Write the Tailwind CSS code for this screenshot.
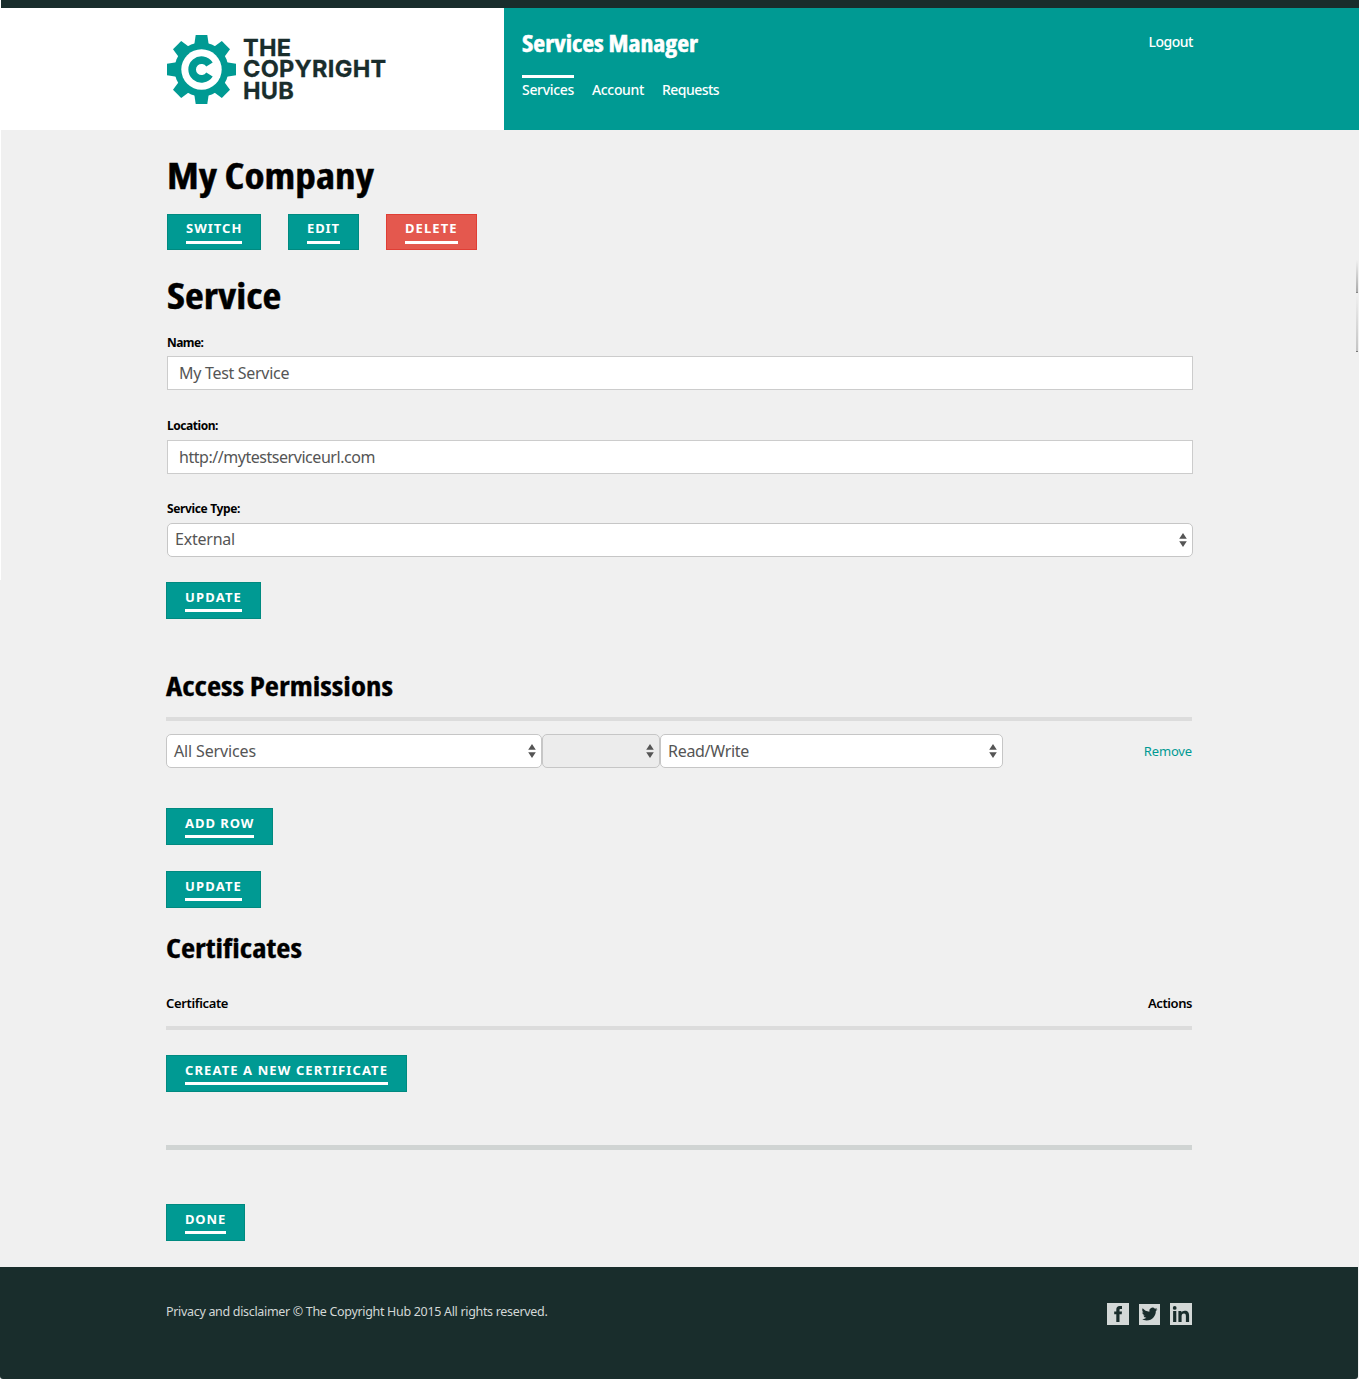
<!DOCTYPE html>
<html lang="en">
<head>
<meta charset="utf-8">
<title>Services Manager</title>
<script src="https://cdn.jsdelivr.net/npm/@tailwindcss/browser@4"></script>
</head>
<body class="relative h-[1379px] overflow-hidden bg-[#f0f0f0] font-['Noto_Sans',sans-serif] text-black">
<svg class="hidden">
  <symbol id="arrows" viewBox="0 0 8 14"><path d="M4 0 7.8 5.800H.2zM4 14 7.800 8.200H.2z" fill="#555"/></symbol>
</svg>
<div class="ml-px h-2 bg-[#192d2c]"></div>
<header class="flex h-[122px]">
  <div class="flex w-[504px] shrink-0 bg-white pt-[26px] pl-[166px]">
    <svg class="h-[71px] w-[71px] shrink-0" viewBox="-35.5 -35.5 71 71">
      <g fill="#009a93">
        <circle r="27"/>
        <path id="t" d="M-7.2-25-5.8-34.5H5.8L7.2-25V25L5.8 34.5H-5.8L-7.2 25z"/>
        <use href="#t" transform="rotate(45)"/><use href="#t" transform="rotate(90)"/><use href="#t" transform="rotate(135)"/>
      </g>
      <circle r="20.2" fill="#fff"/>
      <path d="M8-5A9.4 9.4 0 1 0 8 5" fill="none" stroke="#009a93" stroke-width="7.600"/>
    </svg>
    <div class="ml-[6px] pt-[3px] font-['Inter',sans-serif] text-[23.5px] leading-[21.3px] font-bold tracking-[.3px] text-[#192d2c] [-webkit-text-stroke:.3px_#192d2c]">
      <div>THE</div><div>COPYRIGHT</div><div>HUB</div>
    </div>
  </div>
  <div class="flex grow justify-between bg-[#009a93] pr-[166px] pl-[18px] text-white">
    <div class="pt-[21px]">
      <h1 class="origin-left scale-x-[1.125] font-['Open_Sans',sans-serif] text-[23px] leading-7 font-bold whitespace-nowrap [-webkit-text-stroke:.5px_white] [font-stretch:75%]">Services Manager</h1>
      <nav class="mt-[18px] flex text-sm font-medium">
        <a class="mr-[18px] w-[52px] border-t-[3px] border-white pt-[2px] tracking-[-.31px]">Services</a>
        <a class="mr-[18px] w-[52px] pt-[5px] tracking-[-.34px]">Account</a>
        <a class="pt-[5px] tracking-[-.55px]">Requests</a>
      </nav>
    </div>
    <a class="pt-6 text-sm font-medium tracking-[-.48px]">Logout</a>
  </div>
</header>

<main class="h-[1137px] pl-[166px]">
  <section class="ml-px w-[1026px] pt-[26px]">
    <h2 class="h-10 w-fit origin-left scale-x-[1.145] font-['Open_Sans',sans-serif] text-[36px] leading-10 font-bold whitespace-nowrap [-webkit-text-stroke:.4px_black] [font-stretch:75%]">My Company</h2>
    <div class="mt-[18px] flex gap-[27px] text-[13px] leading-5 font-bold text-white">
      <button class="flex h-9 w-[94px] items-start border border-[#008a80] bg-[#009a93] pt-[3px] pl-[18px]"><span class="w-14 border-b-[3px] pb-[3px] text-left tracking-[1px]">SWITCH</span></button>
      <button class="flex h-9 w-[71px] items-start border border-[#008a80] bg-[#009a93] pt-[3px] pl-[18px]"><span class="w-[33px] border-b-[3px] pb-[3px] text-left tracking-[.9px]">EDIT</span></button>
      <button class="flex h-9 w-[91px] items-start border border-[#e03e35] bg-[#e4584e] pt-[3px] pl-[18px]"><span class="w-[53px] border-b-[3px] pb-[3px] text-left tracking-[1.1px]">DELETE</span></button>
    </div>
    <h2 class="mt-[26px] h-10 w-fit origin-left scale-x-[1.14] font-['Open_Sans',sans-serif] text-[36px] leading-10 font-bold whitespace-nowrap [-webkit-text-stroke:.4px_black] [font-stretch:75%]">Service</h2>
    <label class="mt-[19px] block text-xs leading-4 font-bold tracking-[-.55px]">Name:</label>
    <input class="mt-[5px] block h-[34px] w-full border border-[#ccc] bg-white pl-[11px] text-base tracking-[-.3px] text-[#555]" value="My Test Service">
    <label class="mt-[28px] block text-xs leading-4 font-bold tracking-[-.45px]">Location:</label>
    <input class="mt-[6px] block h-[34px] w-full border border-[#ccc] bg-white pl-[11px] text-base tracking-[-.46px] text-[#555]" value="http://mytestserviceurl.com">
    <label class="mt-[27px] block text-xs leading-4 font-bold tracking-[-.36px]">Service Type:</label>
    <div class="mt-[6px] flex h-[34px] items-center justify-between rounded-[5px] border border-[#c6c6c6] bg-white pr-[5px] pl-[7px] text-base tracking-[-.22px] text-[#555]"><span class="pb-[2px]">External</span><svg class="h-[14px] w-2"><use href="#arrows"/></svg></div>
  </section>

  <section class="w-[1026px] pt-[25px]">
    <button class="flex h-[37px] w-[95px] items-start border border-[#008a80] bg-[#009a93] pt-1 pl-[18px] text-[13px] leading-5 font-bold text-white"><span class="w-[57px] border-b-[3px] pb-[2px] text-left tracking-[1.17px]">UPDATE</span></button>
    <h3 class="mt-[51px] h-8 w-fit origin-left scale-x-[1.144] font-['Open_Sans',sans-serif] text-[27px] leading-8 font-bold whitespace-nowrap [-webkit-text-stroke:.3px_black] [font-stretch:75%]">Access Permissions</h3>
    <div class="mt-[15px] h-1 bg-[#dcdcdc]"></div>
    <div class="mt-[13px] flex h-[34px] items-center text-base text-[#555]">
      <div class="flex h-[34px] w-[376px] items-center justify-between rounded-[5px] border border-[#c6c6c6] bg-white pr-[5px] pl-[7px] tracking-[-.14px]">All Services<svg class="h-[14px] w-2"><use href="#arrows"/></svg></div>
      <div class="flex h-[34px] w-[118px] items-center justify-end rounded-[5px] border border-[#c6c6c6] bg-[#ececec] pr-[5px]"><svg class="h-[14px] w-2"><use href="#arrows"/></svg></div>
      <div class="flex h-[34px] w-[343px] items-center justify-between rounded-[5px] border border-[#c6c6c6] bg-white pr-[5px] pl-[7px] tracking-[-.3px]">Read/Write<svg class="h-[14px] w-2"><use href="#arrows"/></svg></div>
      <a class="ml-auto pt-[2px] text-[13px] tracking-[-.15px] text-[#009a93]">Remove</a>
    </div>
    <button class="mt-10 flex h-[37px] w-[107px] items-start border border-[#008a80] bg-[#009a93] pt-1 pl-[18px] text-[13px] leading-5 font-bold text-white"><span class="w-[69px] border-b-[3px] pb-[2px] text-left tracking-[.95px] whitespace-nowrap">ADD ROW</span></button>
    <button class="mt-[26px] flex h-[37px] w-[95px] items-start border border-[#008a80] bg-[#009a93] pt-1 pl-[18px] text-[13px] leading-5 font-bold text-white"><span class="w-[57px] border-b-[3px] pb-[2px] text-left tracking-[1.17px]">UPDATE</span></button>
    <h3 class="mt-[24px] h-8 w-fit origin-left scale-x-[1.144] font-['Open_Sans',sans-serif] text-[27px] leading-8 font-bold whitespace-nowrap [-webkit-text-stroke:.3px_black] [font-stretch:75%]">Certificates</h3>
    <div class="mt-[29px] flex justify-between text-[13px] leading-5 font-semibold"><span class="tracking-[-.36px]">Certificate</span><span class="tracking-[-.43px]">Actions</span></div>
    <div class="mt-[13px] h-1 bg-[#dcdcdc]"></div>
    <button class="mt-[25px] flex h-[37px] w-[241px] items-start border border-[#008a80] bg-[#009a93] pt-1 pl-[18px] text-[13px] leading-5 font-bold text-white"><span class="w-[203px] border-b-[3px] pb-[2px] text-left tracking-[1.1px] whitespace-nowrap">CREATE A NEW CERTIFICATE</span></button>
    <div class="mt-[53px] h-[5px] bg-[#d0d4d3]"></div>
    <button class="mt-[54px] flex h-[37px] w-[79px] items-start border border-[#008a80] bg-[#009a93] pt-1 pl-[18px] text-[13px] leading-5 font-bold text-white"><span class="w-[41px] border-b-[3px] pb-[2px] text-left tracking-[.85px]">DONE</span></button>
  </section>
</main>

<footer class="mr-px flex h-28 justify-between rounded-b-[3px] bg-[#192d2c] pr-[166px] pl-[166px]">
  <p class="pt-[35px] text-[12.5px] leading-5 tracking-[-.32px] text-[#d3d8d7]">Privacy and disclaimer © The Copyright Hub 2015 All rights reserved.</p>
  <div class="flex gap-[10px] pt-9">
    <svg class="h-[22px] w-[22px]" viewBox="0 0 22 22"><path fill="#d3d8d7" d="M0 0h22v22H0z"/><path fill="#192d2c" d="M9.3 19v-7.700H7.200V8.400h2.100V6.500C9.300 4.200 10.500 3 12.700 3H15v2.900h-1.400c-.9 0-1.100.4-1.100 1.100v1.400H15l-.3 2.900h-2.200V19z"/></svg>
    <svg class="mt-px h-[21px] w-[21px]" viewBox="0 0 21 21"><path fill="#d3d8d7" d="M0 0h21v21H0z"/><path fill="#192d2c" transform="translate(2.600 2.200) scale(.66)" d="M23.950 4.570a10 10 0 0 1-2.820.77 4.960 4.960 0 0 0 2.160-2.720c-.95.55-2 .95-3.130 1.180a4.920 4.920 0 0 0-8.380 4.480C7.690 8.100 4.070 6.130 1.640 3.160a4.820 4.820 0 0 0-.67 2.480c0 1.700.87 3.210 2.190 4.100a4.900 4.900 0 0 1-2.230-.62v.06a4.920 4.920 0 0 0 3.950 4.830 5 5 0 0 1-2.210.08 4.940 4.940 0 0 0 4.600 3.420A9.870 9.870 0 0 1 0 19.540a14 14 0 0 0 7.550 2.210c9.050 0 14-7.500 14-13.990 0-.21 0-.42-.02-.63a9.940 9.940 0 0 0 2.460-2.550z"/></svg>
    <svg class="h-[22px] w-[22px]" viewBox="0 0 22 22"><path fill="#d3d8d7" d="M0 0h22v22H0z"/><g fill="#192d2c"><circle cx="4.700" cy="4.900" r="1.900"/><path d="M3.100 8h3.200v11H3.100zM8.400 8h3v1.500c.6-1 1.700-1.800 3.400-1.800 3.300 0 4.300 2 4.300 5V19h-3.200v-5.700c0-1.600-.3-2.800-1.900-2.800-1.800 0-2.400 1.200-2.400 2.800V19H8.400z"/></g></svg>
  </div>
</footer>

<!-- window edges -->
<div class="absolute top-0 left-0 h-[580px] w-px bg-white"></div>
<div class="absolute top-[260px] right-px h-[33px] w-[2px] border-b border-[#888] bg-linear-to-b from-[#f0f0f0] to-[#aaa]"></div>
<div class="absolute top-[294px] right-px h-[58px] w-[2px] border-b border-[#777] bg-linear-to-b from-[#f0f0f0] to-[#c4c4c4]"></div>
</body>
</html>
